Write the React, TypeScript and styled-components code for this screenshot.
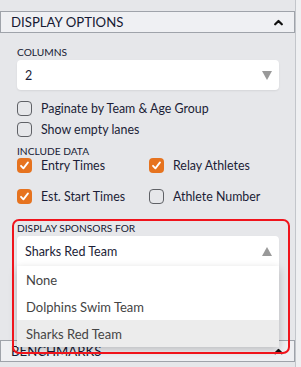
import React from 'react';
import styled, { createGlobalStyle } from 'styled-components';

const GlobalStyle = createGlobalStyle`
  html, body {
    margin: 0;
    padding: 0;
    background: #e6e7ea;
  }
  body {
    font-family: Lato, "Noto Sans", sans-serif;
    color: #1b1d36;
  }
`

const Page = styled.div`
  display: flex;
  width: 301px;
  height: 367px;
  overflow: hidden;
`

const Panel = styled.div`
  width: 295px;
  flex: none;
  padding-top: 11px;
`

const Gutter = styled.div`
  flex: 1;
  background: #eff0f2;
  border-left: 1px solid #c3c6cb;
`

const SectionHeader = styled.div`
  height: 20px;
  display: flex;
  align-items: center;
  justify-content: space-between;
  padding: 0 11px 0 10px;
  border: 1px solid #9fa3aa;
  background: #eff0f3;
  font-size: 13.2px;
  text-transform: uppercase;
  color: #161a33;
  white-space: nowrap;
`

const Body = styled.div`
  padding: 13px 16px 0 17px;
  height: 307px;
  box-sizing: border-box;
`

const FieldLabel = styled.div<{ $top?: number }>`
  font-size: 10.2px;
  line-height: 12px;
  text-transform: uppercase;
  color: #161a33;
  margin-top: ${p => p.$top ?? 0}px;
`

const SelectBox = styled.div<{ $open?: boolean }>`
  position: relative;
  margin-top: 2px;
  height: 30px;
  display: flex;
  align-items: center;
  justify-content: space-between;
  padding: 0 7px 0 8px;
  background: #fff;
  border-radius: 4px 4px ${p => (p.$open ? '0 0' : '4px 4px')};
  box-shadow: 0 1px 2px rgba(0, 0, 0, 0.08);
  border-bottom: ${p => (p.$open ? '2px solid #1766c2' : '0')};
  font-size: 12.5px;
  color: #1b1d36;
`

const Caret = styled.span<{ $up?: boolean }>`
  width: 0;
  height: 0;
  border-left: 5px solid transparent;
  border-right: 5px solid transparent;
  ${p => (p.$up ? 'border-bottom: 9px solid #999;' : 'border-top: 9px solid #999;')}
`

const CheckList = styled.div`
  margin-top: 8px;
`

const CheckRow = styled.label<{ $h?: number }>`
  display: flex;
  align-items: center;
  gap: 9px;
  height: ${p => p.$h ?? 21}px;
  font-size: 12.4px;
  color: #1b1d36;
  white-space: nowrap;
`

const Box = styled.span<{ $on?: boolean }>`
  width: 15px;
  height: 15px;
  flex: none;
  box-sizing: border-box;
  border-radius: 4px;
  border: ${p => (p.$on ? 'none' : '1px solid #5f6166')};
  background: ${p => (p.$on ? '#e6731f' : 'transparent')};
  display: flex;
  align-items: center;
  justify-content: center;
`

const DataGrid = styled.div`
  display: grid;
  grid-template-columns: 132px 1fr;
  row-gap: 15px;
`

const SponsorField = styled.div`
  position: relative;
  margin-top: 18px;
`

const Highlight = styled.div`
  position: absolute;
  top: -3px;
  left: -5px;
  width: 278px;
  height: 135px;
  box-sizing: border-box;
  border: 2px solid #f0141c;
  border-radius: 7px;
  z-index: 3;
  pointer-events: none;
`

const Menu = styled.div`
  position: absolute;
  top: 100%;
  left: 0;
  right: 0;
  z-index: 2;
  background: #fff;
  box-shadow: 0 3px 8px rgba(0, 0, 0, 0.22);
  border-radius: 0 0 3px 3px;
`

const MenuItem = styled.div<{ $active?: boolean }>`
  height: 27px;
  display: flex;
  align-items: center;
  padding-left: 9px;
  font-size: 13px;
  color: #444;
  background: ${p => (p.$active ? '#ececec' : '#fff')};
`

const Check = () => (
  <svg width="11" height="11" viewBox="0 0 11 11">
    <path d="M2 5.8 L4.4 8.4 L9 2.4" fill="none" stroke="#fff" strokeWidth="1.8" strokeLinecap="round" strokeLinejoin="round" />
  </svg>
)

const Chevron = () => (
  <svg width="9" height="7" viewBox="0 0 9 7">
    <path d="M1.2 5.3 L4.5 2 L7.8 5.3" fill="none" stroke="#111" strokeWidth="2.2" strokeLinecap="round" strokeLinejoin="round" />
  </svg>
)

const Option = ({ label, on, h }: { label: string; on?: boolean; h?: number }) => (
  <CheckRow $h={h}>
    <Box $on={on}>{on && <Check />}</Box>
    {label}
  </CheckRow>
)

const sponsors = ['None', 'Dolphins Swim Team', 'Sharks Red Team'];

export default function App() {
  const selected = 'Sharks Red Team';
  return (
    <>
      <GlobalStyle />
      <Page>
        <Panel>
          <SectionHeader>
            Display Options
            <Chevron />
          </SectionHeader>
          <Body>
            <FieldLabel>Columns</FieldLabel>
            <SelectBox>
              2
              <Caret />
            </SelectBox>
            <CheckList>
              <Option label="Paginate by Team & Age Group" />
              <Option label="Show empty lanes" />
            </CheckList>
            <FieldLabel $top={5}>Include Data</FieldLabel>
            <DataGrid>
              <Option label="Entry Times" on h={16} />
              <Option label="Relay Athletes" on h={16} />
              <Option label="Est. Start Times" on h={16} />
              <Option label="Athlete Number" h={16} />
            </DataGrid>
            <SponsorField>
              <Highlight />
              <FieldLabel>Display Sponsors For</FieldLabel>
              <SelectBox $open>
                {selected}
                <Caret $up />
                <Menu>
                  {sponsors.map(s => (
                    <MenuItem key={s} $active={s === selected}>{s}</MenuItem>
                  ))}
                </Menu>
              </SelectBox>
            </SponsorField>
          </Body>
          <SectionHeader>
            Benchmarks
            <Chevron />
          </SectionHeader>
        </Panel>
        <Gutter />
      </Page>
    </>
  );
}
